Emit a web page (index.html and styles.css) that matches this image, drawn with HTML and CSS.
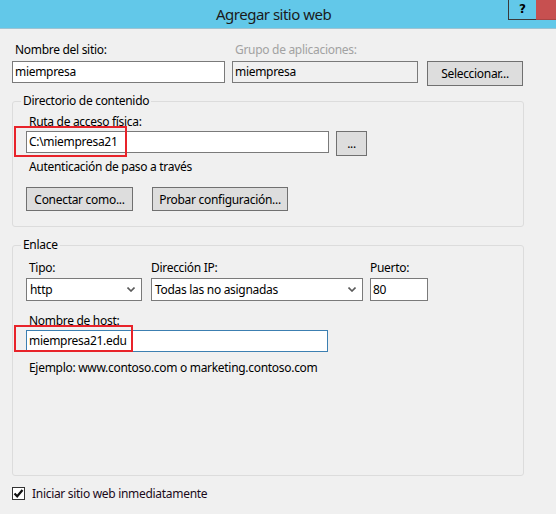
FILE: index.html
```html
<!DOCTYPE html>
<html lang="es">
<head>
<meta charset="utf-8">
<title>Agregar sitio web</title>
<link rel="stylesheet" href="styles.css">
</head>
<body>
<div class="window">
  <div class="titlebar">
    <div class="title">Agregar sitio web</div>
    <div class="controls">
      <span class="help">?</span>
      <span class="close"></span>
    </div>
  </div>
  <div class="content">
    <div class="row top-row">
      <div class="field site">
        <div class="label">Nombre del sitio:</div>
        <div class="input">miempresa</div>
      </div>
      <div class="field pool">
        <div class="label disabled">Grupo de aplicaciones:</div>
        <div class="input readonly">miempresa</div>
      </div>
      <button class="btn select-btn">Seleccionar...</button>
    </div>

    <div class="group dir">
      <div class="legend">Directorio de contenido</div>
      <div class="label inner-label">Ruta de acceso física:</div>
      <div class="row path-row">
        <div class="input path">C:\miempresa21<span class="highlight hl-path"></span></div>
        <button class="btn browse">...</button>
      </div>
      <div class="label auth">Autenticación de paso a través</div>
      <div class="row btn-row">
        <button class="btn connect">Conectar como...</button>
        <button class="btn test">Probar configuración...</button>
      </div>
    </div>

    <div class="group binding">
      <div class="legend">Enlace</div>
      <div class="row bind-row">
        <div class="field type">
          <div class="label">Tipo:</div>
          <div class="dropdown"><span>http</span><svg class="chev" width="8" height="5" viewBox="0 0 8 5"><path d="M0.5 0.5 L4 4 L7.5 0.5" fill="none" stroke="#5a5a5a" stroke-width="1.6"/></svg></div>
        </div>
        <div class="field ip">
          <div class="label">Dirección IP:</div>
          <div class="dropdown"><span>Todas las no asignadas</span><svg class="chev" width="8" height="5" viewBox="0 0 8 5"><path d="M0.5 0.5 L4 4 L7.5 0.5" fill="none" stroke="#5a5a5a" stroke-width="1.6"/></svg></div>
        </div>
        <div class="field port">
          <div class="label">Puerto:</div>
          <div class="input tall">80</div>
        </div>
      </div>
      <div class="label host-label">Nombre de host:</div>
      <div class="input host">miempresa21.edu<span class="highlight hl-host"></span></div>
      <div class="label example">Ejemplo: www.contoso.com o marketing.contoso.com</div>
    </div>

    <div class="check-row">
      <span class="checkbox"><svg width="11" height="11" viewBox="0 0 11 11"><path d="M1.5 5.5 L4.2 8.3 L9.5 2" fill="none" stroke="#111" stroke-width="2.2"/></svg></span>
      <span class="check-label">Iniciar sitio web inmediatamente</span>
    </div>
  </div>
</div>
</body>
</html>
```

FILE: styles.css
```css
* { box-sizing: border-box; }

html, body {
  margin: 0;
  padding: 0;
  background: #f0f0f0;
}

body {
  font-family: "Noto Sans", "Open Sans", sans-serif;
  font-size: 12px;
  line-height: 15px;
  letter-spacing: -0.3px;
  color: #000;
}

.window {
  width: 556px;
  height: 514px;
  display: flex;
  flex-direction: column;
  overflow: hidden;
}

/* Title bar */
.titlebar {
  height: 29px;
  flex: none;
  background: #62c8e9;
  border-bottom: 1px solid #9ec3d2;
  display: flex;
  align-items: flex-start;
}

.title {
  flex: 1;
  padding-left: 216px;
  padding-top: 5px;
  font-size: 15px;
  line-height: 19px;
  letter-spacing: -0.5px;
  color: #1b1b1b;
}

.controls {
  display: flex;
}

.help {
  width: 28px;
  height: 20px;
  border-left: 1px solid #3a3a3a;
  border-bottom: 1px solid #3a3a3a;
  text-align: center;
  font-family: "DejaVu Sans", sans-serif;
  font-weight: bold;
  font-size: 12px;
  line-height: 18px;
  letter-spacing: 0;
  color: #000;
}

.close {
  width: 20px;
  height: 20px;
  background: #c75050;
  border-bottom: 1px solid #a84545;
}

/* Content */
.content {
  flex: 1;
  display: flex;
  flex-direction: column;
  padding: 13px 32px 13px 12px;
}

.row {
  display: flex;
  align-items: flex-start;
}

.field {
  display: flex;
  flex-direction: column;
}

.label {
  padding-left: 3px;
  white-space: nowrap;
}

.label.disabled {
  color: #a2a2a2;
}

.input {
  position: relative;
  height: 22px;
  background: #fff;
  border: 1px solid #7a7a7a;
  padding: 0 2px;
  line-height: 20px;
  white-space: nowrap;
}

.input.readonly {
  background: #f0f0f0;
}

.btn {
  font-family: inherit;
  font-size: 12px;
  line-height: 15px;
  letter-spacing: -0.3px;
  color: #000;
  background: #dddddd;
  border: 1px solid #707070;
  border-radius: 0;
  padding: 0;
  margin: 0;
  height: 25px;
  white-space: nowrap;
}

/* Row 1 */
.top-row .field .label { margin-bottom: 4px; }
.site { width: 213px; }
.pool { width: 186px; margin-left: 7px; }
.select-btn { width: 96px; margin-left: 9px; margin-top: 19px; }

/* Groups */
.group {
  border: 1px solid #dcdcdc;
  border-radius: 3px;
  padding: 0 0 0 13px;
  display: flex;
  flex-direction: column;
}

.legend {
  align-self: flex-start;
  margin-left: -5px;
  margin-top: -9px;
  padding: 0 2px;
  background: #f0f0f0;
  white-space: nowrap;
}

.dir {
  margin-top: 15px;
  padding-bottom: 15px;
}

.inner-label { margin-top: 6px; margin-bottom: 2px; }

.path { width: 303px; }
.browse { width: 31px; margin-left: 7px; }

.auth { margin-top: 3px; }

.btn-row { margin-top: 13px; }
.connect { width: 107px; height: 24px; }
.test { width: 136px; height: 24px; margin-left: 19px; }

.binding {
  margin-top: 18px;
  flex: 1;
}

.bind-row { margin-top: 8px; }
.bind-row .label { margin-bottom: 3px; }
.ip .label, .port .label { padding-left: 0; }

.dropdown {
  height: 23px;
  background: #fff;
  border: 1px solid #7a7a7a;
  display: flex;
  align-items: center;
  justify-content: space-between;
  padding: 0 6px 0 3px;
  white-space: nowrap;
}

.chev { flex: none; }

.type { width: 116px; }
.ip { width: 212px; margin-left: 9px; }
.port { width: 58px; margin-left: 7px; }
.input.tall { height: 23px; line-height: 21px; }

.host-label { margin-top: 12px; margin-bottom: 2px; }

.host {
  width: 302px;
  border-color: #3c7fb1;
}

.example { margin-top: 8px; }

/* Red annotation boxes overlaying inputs */
.highlight {
  position: absolute;
  border: 2px solid #e8232a;
  pointer-events: none;
}

.hl-path {
  left: -13px;
  top: -6px;
  width: 113px;
  height: 31px;
}

.hl-host {
  left: -13px;
  top: -6px;
  width: 119px;
  height: 27px;
}

/* Checkbox */
.check-row {
  display: flex;
  align-items: center;
  margin-top: 10px;
}

.checkbox {
  width: 13px;
  height: 13px;
  border: 1px solid #333;
  background: #fff;
  display: flex;
  align-items: center;
  justify-content: center;
}

.check-label {
  margin-left: 7px;
  color: #1a0a1a;
}
```
